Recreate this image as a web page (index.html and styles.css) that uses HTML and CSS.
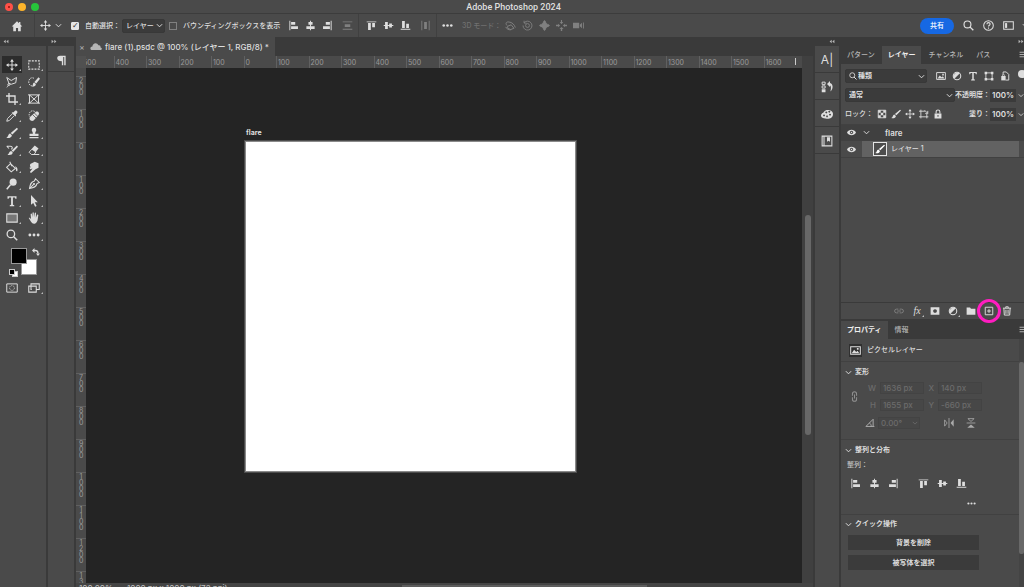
FILE: index.html
```html
<!DOCTYPE html>
<html lang="ja">
<head>
<meta charset="utf-8">
<title>Adobe Photoshop 2024</title>
<link rel="stylesheet" href="styles.css">
</head>
<body>
<svg class="defs" aria-hidden="true">
  <symbol id="home" viewBox="0 0 16 16"><path fill="currentColor" d="M8 1.500 1 8.500h2V15h3.600v-4.500h2.800V15H13V8.500h2L12.500 6V2.500h-1.800v1.700z"/></symbol>
  <symbol id="move" viewBox="0 0 16 16"><path fill="none" stroke="currentColor" stroke-width="1.300" d="M8 2v12M2 8h12"/><path fill="currentColor" d="M8 0l2.500 3.500h-5zM8 16l2.500-3.500h-5zM0 8l3.500-2.500v5zM16 8l-3.500-2.500v5z"/></symbol>
  <symbol id="chev" viewBox="0 0 8 8"><path fill="none" stroke="currentColor" stroke-width="1.100" d="M1 2.500l3 3 3-3"/></symbol>
  <symbol id="al" viewBox="0 0 16 16"><path fill="currentColor" d="M2 1h1.400v14H2zM4.500 3h6v4h-6zM4.500 9h10v4h-10z"/></symbol>
  <symbol id="ac" viewBox="0 0 16 16"><path fill="currentColor" d="M7.300 1h1.400v2H11v4H8.700v2H14v4H8.700v2H7.300v-2H2V9h5.300V7H5V3h2.300z"/></symbol>
  <symbol id="ar" viewBox="0 0 16 16"><path fill="currentColor" d="M12.600 1H14v14h-1.400zM5.500 3h6v4h-6zM1.500 9h10v4h-10z"/></symbol>
  <symbol id="at" viewBox="0 0 16 16"><path fill="currentColor" d="M1 2h14v1.400H1zM3 4.500h4v10H3zM9 4.500h4v6H9z"/></symbol>
  <symbol id="am" viewBox="0 0 16 16"><path fill="currentColor" d="M1 7.300h2V3h4v4.300h2V5h4v2.300h2v1.400h-2V11H9V8.700H7V13H3V8.700H1z"/></symbol>
  <symbol id="ab" viewBox="0 0 16 16"><path fill="currentColor" d="M1 12.600h14V14H1zM3 1.500h4v10H3zM9 5.500h4v6H9z"/></symbol>
  <symbol id="dv" viewBox="0 0 16 16"><path fill="currentColor" d="M1 2h14v1.300H1zM4 6h8v4H4zM1 12.700h14V14H1z"/></symbol>
  <symbol id="dh" viewBox="0 0 16 16"><path fill="currentColor" d="M2 1h1.300v14H2zM6 3h4v10H6zM12.700 1H14v14h-1.300z"/></symbol>
  <symbol id="dots" viewBox="0 0 16 16"><circle cx="2.500" cy="8" r="1.900" fill="currentColor"/><circle cx="8" cy="8" r="1.900" fill="currentColor"/><circle cx="13.500" cy="8" r="1.900" fill="currentColor"/></symbol>
  <symbol id="orbit" viewBox="0 0 16 16"><path fill="none" stroke="currentColor" stroke-width="1.400" d="M3 8C0 5 2 2 6 3c4 0 8 4 9 8M4 9l5-2 4 5-5 2-5-3zM1 10c1 3 5 5 8 4"/></symbol>
  <symbol id="roll" viewBox="0 0 16 16"><path fill="none" stroke="currentColor" stroke-width="1.300" d="M3 4a6.500 6.500 0 1 1-1.500 4M3 1v3.500h3.500"/><circle cx="8" cy="8" r="2.800" fill="none" stroke="currentColor" stroke-width="1.300"/></symbol>
  <symbol id="pan" viewBox="0 0 16 16"><path fill="currentColor" d="M8 0l3 3.500-1 0V6h2.500V5L16 8l-3.500 3v-1H10v2.500h1L8 16l-3-3.500h1V10H3.500v1L0 8l3.500-3v1H6V3.500H5z"/><path fill="currentColor" d="M4.500 4.500h7v7h-7z"/></symbol>
  <symbol id="slide" viewBox="0 0 16 16"><path fill="currentColor" d="M8 6l-2.500-3h1.700V0h1.600v3h1.700zM8 10l-3 3h2v3h2v-3h2zM6 8L3 5.500V7H0v2h3v1.500zM10 8l3-2.500V7h3v2h-3v1.500z"/></symbol>
  <symbol id="cam" viewBox="0 0 16 16"><path fill="currentColor" d="M0 4h9v8H0zM10 7l3-3v8l-3-3zM14.500 3.500h1.300v9h-1.300z"/></symbol>
  <symbol id="search" viewBox="0 0 16 16"><circle cx="6.500" cy="6.500" r="5" fill="none" stroke="currentColor" stroke-width="1.700"/><path stroke="currentColor" stroke-width="2" d="M10 10l5 5"/></symbol>
  <symbol id="help" viewBox="0 0 16 16"><circle cx="8" cy="8" r="7" fill="none" stroke="currentColor" stroke-width="1.500"/><path fill="none" stroke="currentColor" stroke-width="1.600" d="M5.700 6.300C5.700 3 10.500 3.200 10.300 6c0 1.600-2.300 1.600-2.300 3.600M8 11v1.800"/></symbol>
  <symbol id="wspace" viewBox="0 0 16 16"><path fill="none" stroke="currentColor" stroke-width="1.500" d="M1 2.500h14v11H1z"/><path fill="currentColor" d="M3 4.500h3v7H3z"/></symbol>
  <symbol id="marquee" viewBox="0 0 16 16"><path fill="none" stroke="currentColor" stroke-width="1.400" stroke-dasharray="2.600 1.500" d="M1 2.500h14v11H1z"/></symbol>
  <symbol id="lasso" viewBox="0 0 16 16"><path fill="none" stroke="currentColor" stroke-width="1.300" d="M4 10L1 2l6 4 7-4-1 7-6 2zM4 10c-2 0-2 2.500 0 2.500S6 10 4 10zM3 12c0 2-1 2-2 3"/></symbol>
  <symbol id="qsel" viewBox="0 0 16 16"><path fill="none" stroke="currentColor" stroke-width="1.200" stroke-dasharray="2 1.200" d="M8 3C4 1 1 4 1 8s3 6 6 5"/><path fill="currentColor" d="M14 1.500L16 3.500l-5 6.500-2.500-2zM8 8.500l2.500 2c0 3-3 4-5.500 3.500 2-1 1-4.500 3-5.500z"/></symbol>
  <symbol id="crop" viewBox="0 0 16 16"><path fill="none" stroke="currentColor" stroke-width="1.800" d="M4 0v12h12M0 4h12v12"/></symbol>
  <symbol id="frame" viewBox="0 0 16 16"><path fill="none" stroke="currentColor" stroke-width="1.300" d="M2 2.500h12v11H2zM2 2.500l12 11M14 2.500l-12 11M0 2.500h2M14 2.500h2M0 13.500h2M14 13.500h2"/></symbol>
  <symbol id="eyedrop" viewBox="0 0 16 16"><path fill="currentColor" d="M10 3l2-2c2-1 4 1 3 3l-2 2 .5 1.500-1 1L7.500 4l1-1z"/><path fill="none" stroke="currentColor" stroke-width="1.300" d="M8 5.500l-6 6L1 15l3.500-1 6-6"/></symbol>
  <symbol id="heal" viewBox="0 0 16 16"><path fill="none" stroke="currentColor" stroke-width="1.200" stroke-dasharray="2 1.200" d="M9 2C4-1 0 4 2 9"/><path fill="currentColor" d="M3 9l7-6.500c3-2 6 1 4 4L7.500 14C4 16 0 12 3 9z"/><path stroke="#4a4a4a" d="M6 6l5 5M8.500 4l4.500 4.500"/></symbol>
  <symbol id="brush" viewBox="0 0 16 16"><path fill="currentColor" d="M14.500 1L16 2.500 8.500 10 6.300 8zM5.500 8.800l2.300 2.200c.2 3-4 4.500-7.300 3.500C3.500 13 2.500 9.500 5.500 8.800z"/></symbol>
  <symbol id="stamp" viewBox="0 0 16 16"><path fill="currentColor" d="M5 4a3 3 0 1 1 6 0c0 2-1.500 2-1.500 5H14v3H2V9h4.500C6.500 6 5 6 5 4zM2 13.300h12V15H2z"/></symbol>
  <symbol id="hist" viewBox="0 0 16 16"><path fill="currentColor" d="M14.500 2L16 3.500 9.500 10.500l-2-1.700zM7 9.300l2 2c0 3-4 4-7 3 2.500-1 2-5 5-5z"/><path fill="none" stroke="currentColor" stroke-width="1.400" d="M1 3h5c3 0 3 3 1 4M1 3l3 3"/></symbol>
  <symbol id="eraser" viewBox="0 0 16 16"><path fill="currentColor" d="M9 2l5 4-4 5-5.500-4z"/><path fill="none" stroke="currentColor" stroke-width="1.300" d="M5 7l-3.500 4 3 3H8l2.500-3.500M8 14h7"/></symbol>
  <symbol id="bucket" viewBox="0 0 16 16"><path fill="none" stroke="currentColor" stroke-width="1.400" d="M6 3.500L12.500 10 7 14.500.8 8.500zM8 7L5 1"/><path fill="currentColor" d="M12 7c3 1 4 4 3 6.500-1.500.5-2-1-1.700-3.500z"/></symbol>
  <symbol id="smudge" viewBox="0 0 16 16"><path fill="currentColor" d="M3 4l6-3 5 2v6l-4 2-6 5-1.500-1.500L6 10l-3 1-1-2 2-1-1.500-1z"/></symbol>
  <symbol id="dodge" viewBox="0 0 16 16"><circle cx="9.500" cy="5.500" r="4.700" fill="currentColor"/><path stroke="currentColor" stroke-width="2" d="M6 9l-5 6"/></symbol>
  <symbol id="pen" viewBox="0 0 16 16"><path fill="none" stroke="currentColor" stroke-width="1.400" d="M10 1l5 5-3 1.500C11 12 8 13 2 14c1-6 2-9 6.500-10zM2 14l5.500-5.500"/><circle cx="8" cy="8" r="1.400" fill="currentColor"/></symbol>
  <symbol id="type" viewBox="0 0 16 16"><path fill="currentColor" d="M2 1.500h12V5h-1.500l-.7-1.700H9.200v9.700l1.800.5V15H5v-1.500l1.800-.5V3.300H4.200L3.500 5H2z"/></symbol>
  <symbol id="arrow" viewBox="0 0 16 16"><path fill="currentColor" d="M4 0l9 9.500-4 .2 2.500 5-2 1L7 10.500 4 13z"/></symbol>
  <symbol id="rect" viewBox="0 0 16 16"><path fill="#777" stroke="currentColor" stroke-width="1.400" d="M1 2.500h14v11H1z"/></symbol>
  <symbol id="hand" viewBox="0 0 16 16"><path fill="currentColor" d="M1 8c1-1 2 0 3 1.500L3.500 3c0-1.500 1.500-1.300 1.800 0L6 7V1.500C6 0 7.700 0 7.800 1.500L8 7l1-5.500c.2-1.400 1.800-1.200 1.700.3L10.500 7.500 12 4c.6-1.300 2-.6 1.700.6C13 8 13.500 11 11.500 13.500 9 16.500 6 16 4 13z"/></symbol>
  <symbol id="swap" viewBox="0 0 16 16"><path fill="none" stroke="currentColor" stroke-width="2.600" d="M4 5h3c4 0 5 2 5 6"/><path fill="currentColor" d="M0 5l5-5v10zM12 16l-4-5h8z"/></symbol>
  <symbol id="mask" viewBox="0 0 16 16"><path fill="none" stroke="currentColor" stroke-width="1.300" d="M1 2.500h14v11H1z"/><circle cx="8" cy="8" r="3.200" fill="none" stroke="currentColor" stroke-dasharray="1.500 1"/></symbol>
  <symbol id="screen" viewBox="0 0 16 16"><path fill="none" stroke="currentColor" stroke-width="1.400" d="M5 10H4V2.500h11V10h-4M1 5.500h10v8H1z"/></symbol>
  <symbol id="para" viewBox="0 0 16 16"><path fill="currentColor" d="M6 1h8v14h-2V3h-1.500v12h-2V9C0 9 0 1 6 1z"/></symbol>
  <symbol id="cloud" viewBox="0 0 20 14"><path fill="currentColor" d="M4 13C-1 13 0 7 4 7 4 1 12-1 14 5c3-1 4 2 3.500 3.500C21 9 20 13 17 13z"/></symbol>
  <symbol id="histp" viewBox="0 0 16 16"><path fill="none" stroke="currentColor" stroke-width="1.300" d="M1.500 1.500h4v3h-4zM1.500 6.500h4v3h-4z"/><path fill="currentColor" d="M1 11h5v4H1zM8 4l4-4v2.500c4 1 5 7 .5 11.500C14 9 13 6.500 12 6v2z"/></symbol>
  <symbol id="palette" viewBox="0 0 16 16"><path fill="currentColor" fill-rule="evenodd" d="M0 10c0-3 3-3 4-5 2-4 12-3 12 3s-6 7-10 6c-3 0-6-1-6-4zm7-5.500a1.300 1.300 0 1 0 .1 0zm4-1a1.300 1.300 0 1 0 .1 0zM4 8.500a1.300 1.300 0 1 0 .1 0zm8-1a1.300 1.300 0 1 0 .1 0zm-4 2.500a1.200 1.200 0 1 0 .1 0z"/></symbol>
  <symbol id="lib" viewBox="0 0 16 16"><path fill="none" stroke="currentColor" stroke-width="1.400" d="M1.500 1.500h13v13h-13zM4 2v12"/><path fill="currentColor" d="M8 3h4v6l-2-1.500L8 9z"/></symbol>
  <symbol id="image" viewBox="0 0 16 16"><path fill="none" stroke="currentColor" stroke-width="1.500" d="M1 2.500h14v11H1z"/><path fill="currentColor" d="M2.500 12l3.500-5 3 3 2-1.500 2.500 3.500zM10 4.500h2.500V7H10z"/></symbol>
  <symbol id="adj" viewBox="0 0 16 16"><circle cx="8" cy="8" r="6" fill="none" stroke="currentColor" stroke-width="1.700"/><path fill="currentColor" d="M12.200 3.800A6 6 0 0 0 3.800 12.200z"/></symbol>
  <symbol id="shape" viewBox="0 0 16 16"><path fill="none" stroke="currentColor" stroke-width="1.400" d="M3 3h10v10H3z"/><path fill="currentColor" d="M1 1h4v4H1zM11 1h4v4h-4zM1 11h4v4H1zM11 11h4v4h-4z"/></symbol>
  <symbol id="smart" viewBox="0 0 16 16"><path fill="none" stroke="currentColor" stroke-width="1.500" d="M5 6V1.500h5l4 4v9H9"/><path fill="currentColor" d="M2 8h7v7H2z"/><path fill="none" stroke="currentColor" d="M4 8V6h3v2"/></symbol>
  <symbol id="checker" viewBox="0 0 16 16"><path fill="none" stroke="currentColor" stroke-width="1.400" d="M2 2h12v12H2z"/><path fill="currentColor" d="M2 2h4v4H2zM10 2h4v4h-4zM6 6h4v4H6zM2 10h4v4H2zM10 10h4v4h-4z"/></symbol>
  <symbol id="artb" viewBox="0 0 16 16"><path fill="none" stroke="currentColor" stroke-width="1.400" d="M0 3.500h10M3 1v14M0 12.500h15M12.500 8v7M9 2l5 5M14 3v4h-4"/></symbol>
  <symbol id="lock" viewBox="0 0 16 16"><path fill="currentColor" fill-rule="evenodd" d="M2.500 7h11v8h-11zm4.700 2.500v3h1.600v-3z"/><path fill="none" stroke="currentColor" stroke-width="1.700" d="M5 7V4.500c0-4 6-4 6 0V7"/></symbol>
  <symbol id="eye" viewBox="0 0 16 16"><path fill="currentColor" fill-rule="evenodd" d="M0 8c3-6.500 13-6.500 16 0-3 6.500-13 6.500-16 0zm8-3a3 3 0 1 0 .1 0z"/><circle cx="8" cy="8" r="1.300" fill="currentColor"/></symbol>
  <symbol id="link" viewBox="0 0 16 16"><path fill="none" stroke="currentColor" stroke-width="1.500" d="M7 5H4a3 3 0 0 0 0 6h3M9 5h3a3 3 0 0 1 0 6H9M5 8h6"/></symbol>
  <symbol id="addmask" viewBox="0 0 16 16"><path fill="currentColor" fill-rule="evenodd" d="M1 2h14v12H1zm7 3a3 3 0 1 0 .1 0z"/></symbol>
  <symbol id="folder" viewBox="0 0 16 16"><path fill="currentColor" d="M1 2.500h5.500L8 4.500h7V14H1z"/></symbol>
  <symbol id="plus" viewBox="0 0 16 16"><path fill="none" stroke="currentColor" stroke-width="1.500" d="M2 2h12v12H2zM8 5v6M5 8h6"/></symbol>
  <symbol id="trash" viewBox="0 0 16 16"><path fill="none" stroke="currentColor" stroke-width="1.600" d="M1.500 3.500h13M6 3V1.300h4V3M3 4l.7 10.500h8.600L13 4M6.300 6v6.500M9.700 6v6.500"/></symbol>
  <symbol id="menu" viewBox="0 0 16 16"><path stroke="currentColor" stroke-width="1.700" d="M1 4h14M1 8h14M1 12h14"/></symbol>
  <symbol id="angle" viewBox="0 0 16 16"><path fill="none" stroke="currentColor" stroke-width="1.600" d="M13 2L1.500 13.500H15M7 8c2 1 3 3 3 5.500M13 2v11"/></symbol>
  <symbol id="fliph" viewBox="0 0 16 16"><path fill="none" stroke="currentColor" stroke-width="1.300" d="M8 0v16M1 3v10l4-5z"/><path fill="currentColor" d="M15.500 2v12L10.500 8z"/></symbol>
  <symbol id="flipv" viewBox="0 0 16 16"><path fill="none" stroke="currentColor" stroke-width="1.300" d="M1 8h14M3 1h10L8 5.500z"/><path fill="currentColor" d="M2 15.500h12L8 10.500z"/></symbol>
  <symbol id="dbl" viewBox="0 0 10 8"><path fill="currentColor" d="M4.500 1v6L1 4zM9 1v6L5.500 4z"/></symbol>
</svg>

<header class="titlebar">
  <span class="light red"></span><span class="light yellow"></span><span class="light green"></span>
  <h1>Adobe Photoshop 2024</h1>
</header>

<div class="options">
  <button class="home" aria-label="ホーム"><svg><use href="#home"/></svg></button>
  <button class="movetool" aria-label="移動ツール"><svg><use href="#move"/></svg><svg class="chev"><use href="#chev"/></svg></button>
  <label class="check auto"><input type="checkbox" checked>自動選択：</label>
  <label class="select target"><select aria-label="選択対象"><option>レイヤー</option></select><svg class="chev"><use href="#chev"/></svg></label>
  <label class="check bbox"><input type="checkbox">バウンディングボックスを表示</label>
  <div class="group">
    <button aria-label="左端揃え"><svg><use href="#al"/></svg></button>
    <button aria-label="水平方向中央揃え"><svg><use href="#ac"/></svg></button>
    <button aria-label="右端揃え"><svg><use href="#ar"/></svg></button>
    <button class="dim wide" aria-label="垂直方向に分布"><svg><use href="#dv"/></svg></button>
  </div>
  <div class="group">
    <button aria-label="上端揃え"><svg><use href="#at"/></svg></button>
    <button aria-label="垂直方向中央揃え"><svg><use href="#am"/></svg></button>
    <button aria-label="下端揃え"><svg><use href="#ab"/></svg></button>
    <button class="dim wide" aria-label="水平方向に分布"><svg><use href="#dh"/></svg></button>
  </div>
  <div class="group last">
    <button aria-label="その他"><svg><use href="#dots"/></svg></button>
    <span class="mode">3D モード：</span>
    <button class="dim" aria-label="軌道"><svg><use href="#orbit"/></svg></button>
    <button class="dim" aria-label="ロール"><svg><use href="#roll"/></svg></button>
    <button class="dim" aria-label="パン"><svg><use href="#pan"/></svg></button>
    <button class="dim" aria-label="スライド"><svg><use href="#slide"/></svg></button>
    <button class="dim" aria-label="ズームカメラ"><svg><use href="#cam"/></svg></button>
  </div>
  <div class="right">
    <button class="share">共有</button>
    <button aria-label="検索"><svg><use href="#search"/></svg></button>
    <button aria-label="ヘルプ"><svg><use href="#help"/></svg></button>
    <button class="ws" aria-label="ワークスペース"><svg><use href="#wspace"/></svg><svg class="chev"><use href="#chev"/></svg></button>
  </div>
</div>

<main class="workspace">
  <aside class="toolbox">
    <div class="strip"><svg><use href="#dbl"/></svg></div>
    <div class="tools">
      <button class="on" aria-label="移動"><svg><use href="#move"/></svg></button>
      <button aria-label="長方形選択"><svg><use href="#marquee"/></svg></button>
      <button aria-label="なげなわ"><svg><use href="#lasso"/></svg></button>
      <button aria-label="クイック選択"><svg><use href="#qsel"/></svg></button>
      <button aria-label="切り抜き"><svg><use href="#crop"/></svg></button>
      <button class="single" aria-label="フレーム"><svg><use href="#frame"/></svg></button>
      <button aria-label="スポイト"><svg><use href="#eyedrop"/></svg></button>
      <button aria-label="修復ブラシ"><svg><use href="#heal"/></svg></button>
      <button aria-label="ブラシ"><svg><use href="#brush"/></svg></button>
      <button aria-label="スタンプ"><svg><use href="#stamp"/></svg></button>
      <button aria-label="ヒストリーブラシ"><svg><use href="#hist"/></svg></button>
      <button aria-label="消しゴム"><svg><use href="#eraser"/></svg></button>
      <button aria-label="塗りつぶし"><svg><use href="#bucket"/></svg></button>
      <button aria-label="指先"><svg><use href="#smudge"/></svg></button>
      <button aria-label="覆い焼き"><svg><use href="#dodge"/></svg></button>
      <button aria-label="ペン"><svg><use href="#pen"/></svg></button>
      <button aria-label="文字"><svg><use href="#type"/></svg></button>
      <button aria-label="パス選択"><svg><use href="#arrow"/></svg></button>
      <button aria-label="長方形"><svg><use href="#rect"/></svg></button>
      <button aria-label="手のひら"><svg><use href="#hand"/></svg></button>
      <button class="single" aria-label="ズーム"><svg><use href="#search"/></svg></button>
      <button aria-label="ツールバーを編集"><svg><use href="#dots"/></svg></button>
    </div>
    <div class="swatches">
      <span class="bg"></span><span class="fg"></span>
      <svg class="swap"><use href="#swap"/></svg>
      <span class="mini back"></span><span class="mini"></span>
    </div>
    <div class="tools">
      <button class="single" aria-label="クイックマスク"><svg><use href="#mask"/></svg></button>
      <button aria-label="スクリーンモード"><svg><use href="#screen"/></svg></button>
    </div>
  </aside>

  <aside class="sidedock">
    <div class="strip"><svg class="flip"><use href="#dbl"/></svg></div>
    <button aria-label="段落"><svg><use href="#para"/></svg></button>
  </aside>

  <section class="document">
    <div class="doctabs">
      <div class="doctab"><button aria-label="閉じる">×</button><svg><use href="#cloud"/></svg><span>flare (1).psdc @ 100% (レイヤー 1, RGB/8) *</span></div>
    </div>
    <div class="view">
      <div class="corner"></div>
      <div class="hruler"><span>500</span><span>400</span><span>300</span><span>200</span><span>100</span><span>0</span><span>100</span><span>200</span><span>300</span><span>400</span><span>500</span><span>600</span><span>700</span><span>800</span><span>900</span><span>1000</span><span>1100</span><span>1200</span><span>1300</span><span>1400</span><span>1500</span><span class="cursor">1600</span></div>
      <div class="vruler"><span>200</span><span>100</span><span>0</span><span>100</span><span>200</span><span>300</span><span>400</span><span>500</span><span>600</span><span>700</span><span>800</span><span>900</span><span>1000</span><span>1100</span><span>1200</span><span>1300</span></div>
      <div class="canvas">
        <figure class="artboard"><figcaption>flare</figcaption><div class="sheet"></div></figure>
      </div>
      <div class="vscroll"><span></span></div>
    </div>
    <div class="status"><span>100.00%</span><span>1000 px x 1000 px (72 ppi)</span><i></i></div>
  </section>

  <aside class="icondock">
    <div class="strip"><svg><use href="#dbl"/></svg></div>
    <button class="char" aria-label="文字パネル">A|</button>
    <button aria-label="ヒストリー"><svg><use href="#histp"/></svg></button>
    <button aria-label="カラー"><svg><use href="#palette"/></svg></button>
    <button aria-label="ライブラリ"><svg><use href="#lib"/></svg></button>
  </aside>

  <aside class="panels">
    <div class="strip end"><svg class="flip"><use href="#dbl"/></svg></div>
    <section class="layers">
      <nav class="tabs"><button>パターン</button><button class="on">レイヤー</button><button>チャンネル</button><button>パス</button><svg class="menu"><use href="#menu"/></svg></nav>
      <div class="controls">
        <div class="row">
          <label class="select kind"><svg class="lens"><use href="#search"/></svg><select aria-label="フィルター"><option>種類</option></select><svg class="chev"><use href="#chev"/></svg></label>
          <div class="filters">
            <button aria-label="ピクセル"><svg><use href="#image"/></svg></button>
            <button aria-label="調整"><svg><use href="#adj"/></svg></button>
            <button aria-label="テキスト"><svg><use href="#type"/></svg></button>
            <button aria-label="シェイプ"><svg><use href="#shape"/></svg></button>
            <button aria-label="スマートオブジェクト"><svg><use href="#smart"/></svg></button>
            <span class="toggle"></span>
          </div>
        </div>
        <div class="row">
          <label class="select blend"><select aria-label="描画モード"><option>通常</option></select><svg class="chev"><use href="#chev"/></svg></label>
          <label class="pct">不透明度：<input value="100%"><svg class="chev"><use href="#chev"/></svg></label>
        </div>
        <div class="row">
          <span class="locks">ロック：<svg><use href="#checker"/></svg><svg><use href="#brush"/></svg><svg><use href="#move"/></svg><svg><use href="#artb"/></svg><svg><use href="#lock"/></svg></span>
          <label class="pct">塗り：<input value="100%"><svg class="chev"><use href="#chev"/></svg></label>
        </div>
      </div>
      <ul class="list">
        <li class="parent"><svg class="eye"><use href="#eye"/></svg><div><svg class="chev"><use href="#chev"/></svg><b>flare</b></div></li>
        <li class="child"><svg class="eye"><use href="#eye"/></svg><div><span class="thumb"><svg><use href="#brush"/></svg></span>レイヤー 1</div></li>
      </ul>
      <div class="layerbar">
        <button class="dim" aria-label="リンク"><svg><use href="#link"/></svg></button>
        <button class="fx more" aria-label="レイヤースタイル">fx</button>
        <button aria-label="マスクを追加"><svg><use href="#addmask"/></svg></button>
        <button class="more" aria-label="調整レイヤー"><svg><use href="#adj"/></svg></button>
        <button aria-label="グループ"><svg><use href="#folder"/></svg></button>
        <button class="ring" aria-label="新規レイヤー"><svg><use href="#plus"/></svg></button>
        <button aria-label="削除"><svg><use href="#trash"/></svg></button>
      </div>
    </section>
    <section class="props">
      <nav class="tabs"><button class="on">プロパティ</button><button>情報</button><svg class="menu"><use href="#menu"/></svg></nav>
      <div class="propbody">
        <div class="propmain">
          <div class="kindrow"><span><svg><use href="#image"/></svg></span>ピクセルレイヤー</div>
          <section class="transform">
            <h2><svg class="chev"><use href="#chev"/></svg>変形</h2>
            <div class="fields">
              <svg class="chain"><use href="#link"/></svg>
              <label for="w">W</label><input id="w" value="1636 px" disabled>
              <label for="x">X</label><input id="x" value="140 px" disabled>
              <label for="h">H</label><input id="h" value="1655 px" disabled>
              <label for="y">Y</label><input id="y" value="-660 px" disabled>
            </div>
            <div class="anglerow">
              <label for="a" aria-label="角度"><svg><use href="#angle"/></svg></label>
              <span class="anglebox"><input id="a" value="0.00°" disabled><svg class="chev"><use href="#chev"/></svg></span>
              <button aria-label="水平方向に反転"><svg><use href="#fliph"/></svg></button>
              <button aria-label="垂直方向に反転"><svg><use href="#flipv"/></svg></button>
            </div>
          </section>
          <section class="align">
            <h2><svg class="chev"><use href="#chev"/></svg>整列と分布</h2>
            <p>整列：</p>
            <div class="alignrow">
              <button aria-label="左端"><svg><use href="#al"/></svg></button>
              <button aria-label="水平中央"><svg><use href="#ac"/></svg></button>
              <button aria-label="右端"><svg><use href="#ar"/></svg></button>
              <button class="gap" aria-label="上端"><svg><use href="#at"/></svg></button>
              <button aria-label="垂直中央"><svg><use href="#am"/></svg></button>
              <button aria-label="下端"><svg><use href="#ab"/></svg></button>
            </div>
            <button class="moredots" aria-label="詳細"><svg><use href="#dots"/></svg></button>
          </section>
          <section class="quick">
            <h2><svg class="chev"><use href="#chev"/></svg>クイック操作</h2>
            <button>背景を削除</button>
            <button>被写体を選択</button>
          </section>
        </div>
        <div class="pscroll"><span></span></div>
      </div>
    </section>
  </aside>
</main>
</body>
</html>
```
FILE: styles.css
```css
*, *::before, *::after { box-sizing: border-box; margin: 0; padding: 0; }
:root {
  --panel: #4a4a4a;
  --dark: #3a3a3a;
  --line: #3a3a3a;
  --ink: #dedede;
}
body {
  height: 100vh;
  overflow: hidden;
  display: flex;
  flex-direction: column;
  background: var(--dark);
  color: var(--ink);
  font: 500 7px/12px Inter, "Noto Sans CJK JP", sans-serif;
}
.defs { display: none; }
button, input, select { font: inherit; color: inherit; background: none; border: 0; border-radius: 0; appearance: none; min-width: 0; }
button { display: flex; align-items: center; justify-content: center; }
svg { width: 11px; height: 11px; flex: none; display: block; }
svg.chev { width: 7px; height: 7px; }
ul { list-style: none; }
.dim { color: #808080; }

/* title bar */
.titlebar { flex: none; height: 14px; display: flex; align-items: center; gap: 5px; padding-left: 5px; background: var(--panel); border-bottom: 1px solid #3c3c3c; }
.titlebar h1 { flex: 1; margin-right: 41px; text-align: center; font: 500 9px/12px Roboto, sans-serif; }
.light { width: 8px; height: 8px; border-radius: 50%; }
.red { border: 3px solid #ff5047; background: #8f130d; }
.yellow { background: #fdb42b; }
.green { background: #27c43b; }

/* options bar */
.options { flex: none; height: 23px; display: flex; align-items: center; background: var(--panel); white-space: nowrap; }
.options .home { width: 35px; height: 23px; border-right: 1px solid #404040; }
.options .home svg { width: 12px; height: 12px; }
.movetool { width: 36px; gap: 4px; padding-right: 4px; }
.check { display: flex; align-items: center; gap: 6px; }
.check input { flex: none; width: 8px; height: 8px; border: 1px solid #808080; }
.check input:checked { background: #e6e6e6; border-color: #e6e6e6; border-radius: 1px; display: grid; place-items: center; }
.check input:checked::before { content: "✓"; color: #333; font: bold 8px/6px "DejaVu Sans", sans-serif; }
.auto { width: 51px; }
.select { display: grid; align-items: center; background: #3b3b3b; border: 1px solid #383838; border-radius: 2px; height: 14px; }
.select > * { grid-row: 1; grid-column: 1; }
.select select { width: 100%; height: 12px; padding-left: 3px; }
.select .chev { justify-self: end; margin-right: 1px; }
.target { width: 43px; }
.bbox { margin-left: 4px; width: 112px; }
.group { display: flex; align-items: center; height: 23px; padding-left: 4px; border-right: 1px solid #404040; }
.group button { width: 17px; }
.group .wide { width: 22px; }
.group.last { border: 0; padding-left: 2px; }
.mode { color: #707070; margin: 0 2px 0 6px; width: 38px; }
.right { margin-left: auto; display: flex; align-items: center; gap: 9px; }
.share { width: 34px; height: 16px; border-radius: 8px; background: #1668e3; color: #fff; }
.right button { gap: 8px; }
.ws { margin-right: -5px; }

/* workspace */
.workspace { flex: 1; min-height: 0; display: flex; }
.strip { height: 9px; flex: none; display: flex; align-items: center; padding-left: 3px; background: var(--dark); color: #b8b8b8; align-self: stretch; }
.strip svg { width: 6px; height: 5px; }
.strip .flip { transform: scaleX(-1); }
.strip.end { justify-content: flex-end; }

.toolbox { flex: none; width: 48px; background: var(--panel); border-right: 2px solid var(--line); display: flex; flex-direction: column; }
.tools { display: grid; grid-template-columns: 20px 20px; column-gap: 2px; padding-left: 2px; margin-top: 10px; grid-auto-rows: 17px; }
.tools button { position: relative; }
.tools .on { background: #2c2c2c; }
.tools button::after { content: ""; position: absolute; right: 1px; bottom: 2px; border: 1px solid transparent; border-right-color: #bbb; border-bottom-color: #bbb; }
.tools .single::after { display: none; }
.tools svg { width: 12px; height: 12px; }
.swatches { position: relative; height: 31px; margin-top: 4px; }
.swatches span { position: absolute; width: 16px; height: 16px; border: 1px solid #999; }
.fg { left: 11px; top: 1px; background: #000; }
.bg { left: 21px; top: 12px; background: #fff; }
.swap { position: absolute; left: 32px; top: 1px; width: 8px; height: 8px; }
.swatches .mini { left: 9px; top: 22px; width: 6px; height: 6px; background: #000; border-color: #ccc; }
.swatches .back { left: 12px; top: 24px; background: #fff; }
.swatches + .tools { margin-top: 1px; }

.sidedock { flex: none; width: 28px; background: var(--panel); border-right: 2px solid var(--line); }
.sidedock button { width: 100%; height: 26px; padding-top: 3px; border-bottom: 1px solid var(--line); }

/* document */
.document { flex: 1; min-width: 0; display: flex; flex-direction: column; }
.doctabs { flex: none; height: 19px; display: flex; }
.doctab { display: flex; align-items: center; gap: 3px; padding: 0 6px 0 2px; background: var(--panel); font-size: 8px; white-space: nowrap; }
.doctab button { width: 8px; color: #aaa; margin-right: 1px; }
.doctab svg { width: 12px; height: 9px; color: #b5b5b5; }
.view { flex: 1; min-height: 0; display: grid; grid-template: 12px 1fr / 10px 1fr 11px; }
.corner { background: #505050; }
.hruler { grid-column: 2; display: flex; overflow: hidden; background: var(--panel); color: #9a9a9a; font-size: 7px; font-weight: 400; }
.hruler span { flex: 1 1 0; min-width: 0; border-left: 1px solid #606060; padding-left: 1px; line-height: 14px; }
.hruler span:first-child { margin-left: -5px; }
.cursor { display: flex; justify-content: space-between; padding-right: 6px; }
.cursor::after { content: ""; width: 1px; height: 7px; margin-top: 2px; background: #ccc; }
.vruler { grid-area: 2 / 1; overflow: hidden; padding-top: 8px; background: var(--panel); color: #9a9a9a; font-size: 7px; font-weight: 400; }
.vruler span { display: block; height: 33px; border-top: 1px solid #606060; padding: 1px 3px 0; line-height: 6px; word-break: break-all; text-align: center; }
.canvas { grid-area: 2 / 2; background: #242424; overflow: hidden; padding: 59px 0 0 159px; }
.artboard { width: 331px; }
.artboard figcaption { height: 14px; font-weight: 700; padding-left: 1px; }
.sheet { aspect-ratio: 1; background: #fff; border: 1px solid #8a8a8a; box-shadow: 0 0 0 1px #4c4c4c; }
.vscroll { grid-area: 1 / 3 / 3 / 4; padding: 159px 2px 0 3px; background: #404040; }
.vscroll span { display: block; height: 220px; border-radius: 3px; background: #686868; }
.status { flex: none; height: 4px; overflow: hidden; display: flex; gap: 14px; padding-left: 3px; background: #444; color: #bbb; font-size: 8px; line-height: 10px; white-space: nowrap; }
.status i { width: 245px; margin: 2px 0 0 160px; background: #5d5d5d; }

/* collapsed panel icons */
.icondock { flex: none; width: 28px; background: var(--panel); border: solid var(--line); border-width: 0 2px; }
.icondock .strip { justify-content: flex-end; padding-right: 4px; }
.icondock button { width: 100%; height: 27px; padding-top: 2px; border-bottom: 1px solid var(--line); }
.icondock .char { font-size: 12px; font-weight: 400; }
.icondock svg { width: 12px; height: 12px; }
.icondock .strip svg { width: 6px; height: 5px; }

/* right panels */
.panels { flex: none; width: 183px; display: flex; flex-direction: column; overflow: hidden; background: var(--panel); }
.tabs { flex: none; height: 18px; display: flex; gap: 1px; background: var(--dark); color: #b5b5b5; }
.tabs button { padding: 0 6px; white-space: nowrap; }
.tabs .on { background: var(--panel); color: #eee; font-weight: 700; }
.tabs .menu { margin: 4px -4px 0 auto; width: 9px; height: 9px; }
.layers { flex: none; height: 275px; display: flex; flex-direction: column; border-bottom: 2px solid var(--line); }
.controls { display: flex; flex-direction: column; gap: 5px; padding: 5px 0 3px 4px; }
.row { display: flex; align-items: center; height: 14px; white-space: nowrap; font-weight: 600; }
.kind { width: 82px; }
.kind .lens { width: 8px; height: 8px; margin-left: 3px; }
.kind select { padding-left: 12px; }
.filters { display: flex; align-items: center; margin-left: 6px; }
.filters button { width: 16px; }
.filters svg { width: 10px; height: 10px; }
.toggle { width: 8px; height: 8px; border-radius: 50%; background: #ddd; margin: -5px -6px 0 5px; }
.blend { width: 110px; }
.pct { display: flex; align-items: center; margin-left: auto; }
.pct input { width: 26px; height: 13px; padding-left: 2px; background: #3b3b3b; font-size: 8px; }
.pct .chev { margin-left: 2px; width: 6px; }
.locks { display: flex; align-items: center; gap: 4px; font-weight: 500; }
.locks svg { width: 10px; height: 10px; }
.list { flex: 1; }
.list li { display: flex; align-items: center; height: 16px; border-top: 1px solid #414141; }
.list div { flex: 1; display: flex; align-items: center; height: 100%; margin-right: 5px; }
.list .eye { width: 9px; height: 9px; margin: 0 6px; }
.list .parent { background: #404040; }
.list .parent .chev { margin: 0 15px 0 1px; }
.list .parent b { font-size: 8px; font-weight: 600; }
.list .child { height: 18px; border-bottom: 1px solid #414141; }
.list .child div { background: #626262; gap: 4px; padding-left: 11px; }
.thumb { width: 14px; height: 14px; display: grid; place-items: center; background: #4d4d4d; border: 1px solid #e5e5e5; }
.thumb svg { width: 10px; height: 10px; color: #fff; }
.layerbar { height: 17px; display: flex; align-items: center; padding-left: 49px; border-top: 1px solid var(--line); }
.layerbar button { width: 18px; height: 16px; position: relative; }
.layerbar svg { width: 10px; height: 10px; }
.layerbar .fx { font: italic 10px/12px "Liberation Serif", serif; }
.more::after { content: ""; position: absolute; right: 2px; bottom: 2px; border: 1px solid #bbb; border-left-color: transparent; border-top-color: transparent; }
.ring::after { content: ""; position: absolute; left: -3px; top: -4px; width: 24px; height: 24px; border: 3px solid #ff1dc0; border-radius: 50%; z-index: 2; }

.props { flex: 1; min-height: 0; display: flex; flex-direction: column; }
.propbody { flex: 1; min-height: 0; display: flex; }
.propmain { flex: 1; }
.kindrow { display: flex; align-items: center; gap: 5px; height: 23px; padding-left: 8px; border-bottom: 1px solid #414141; }
.kindrow span { width: 13px; height: 13px; display: grid; place-items: center; background: #303030; }
.props h2 { display: flex; align-items: center; gap: 3px; font-size: 7px; font-weight: 700; line-height: 12px; padding-left: 4px; }
.transform { padding-top: 4px; height: 78px; border-bottom: 1px solid #414141; color: #6c6c6c; font-size: 8px; }
.transform h2 { color: var(--ink); }
.fields { display: grid; grid-template-columns: 14px 9px 44px 6px 44px; gap: 5px 4px; padding: 4px 0 0 8px; align-items: center; }
.fields input, .anglebox { height: 12px; padding-left: 2px; border: 1px solid #434343; background: #474747; }
.fields input { width: 100%; }
.chain { grid-row: 1 / 3; transform: rotate(90deg); color: #909090; }
.fields label { justify-self: end; }
.anglerow { display: flex; align-items: center; padding: 6px 0 0 24px; color: #aaa; }
.anglerow svg { width: 10px; height: 10px; }
.anglebox { display: flex; align-items: center; width: 42px; margin: 0 18px 0 3px; color: #6c6c6c; }
.anglebox input { width: 31px; }
.anglebox svg.chev { width: 6px; height: 6px; }
.anglerow button { width: 22px; }
.align { padding-top: 4px; height: 75px; border-bottom: 1px solid #414141; }
.align p { padding: 3px 0 0 6px; color: #c4c4c4; }
.alignrow { display: flex; padding: 6px 0 0 5px; }
.alignrow button { width: 19px; height: 13px; }
.alignrow .gap { margin-left: 11px; }
.moredots { margin: 9px 0 0 126px; }
.moredots svg { width: 9px; height: 9px; }
.quick { padding-top: 3px; }
.quick button { width: 131px; height: 15px; margin: 5px 0 0 7px; background: #3b3b3b; font-weight: 700; }
.pscroll { width: 5px; padding-top: 23px; background: #444; }
.pscroll span { display: block; height: 192px; border-radius: 2px; background: #686868; }
```
